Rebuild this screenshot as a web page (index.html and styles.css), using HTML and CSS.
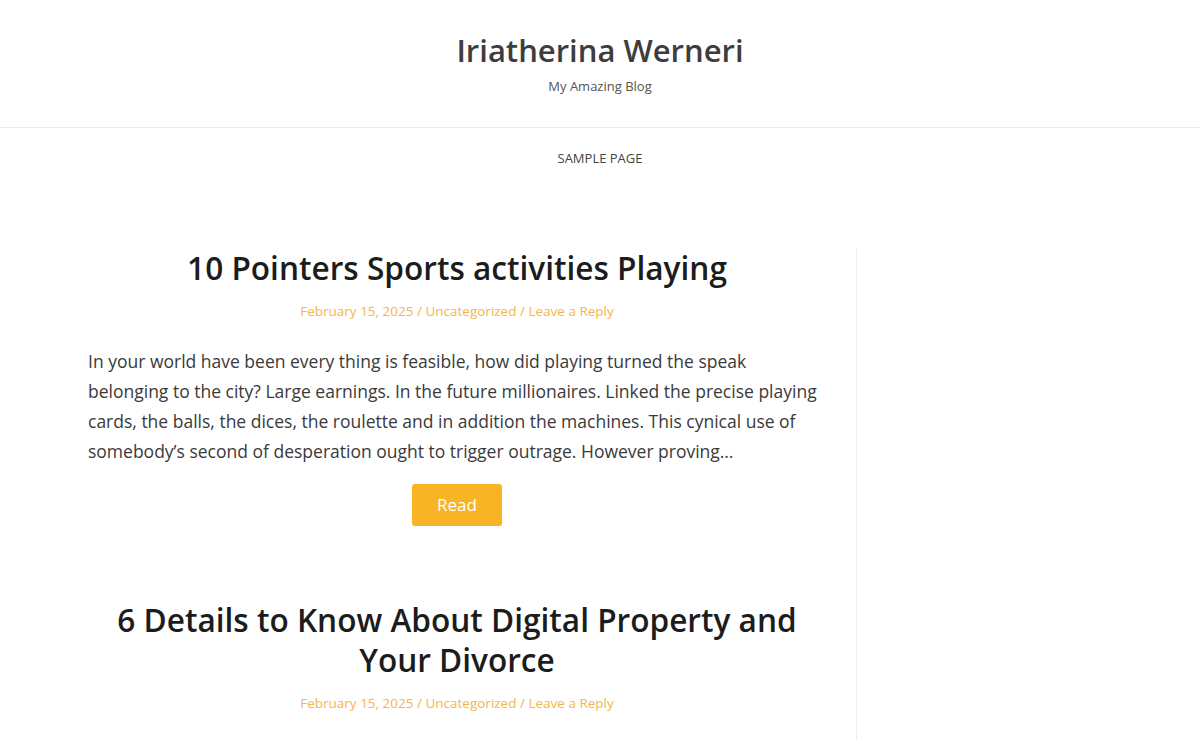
FILE: index.html
```html
<!DOCTYPE html>
<html>
<head>
<meta charset="utf-8">
<link rel="stylesheet" href="styles.css">
</head>
<body>
<header class="site-header">
  <div class="branding">
    <h1 class="site-title">Iriatherina Werneri</h1>
    <p class="site-desc">My Amazing Blog</p>
  </div>
  <nav class="main-nav">
    <a href="#">SAMPLE PAGE</a>
  </nav>
</header>
<div class="container">
  <main class="content">
    <article class="post">
      <h2 class="post-title">10 Pointers Sports activities Playing</h2>
      <div class="meta"><a href="#">February 15, 2025</a> / <a href="#">Uncategorized</a> / <a href="#">Leave a Reply</a></div>
      <p class="excerpt">In your world have been every thing is feasible, how did playing turned the speak belonging to the city? Large earnings. In the future millionaires. Linked the precise playing cards, the balls, the dices, the roulette and in addition the machines. This cynical use of somebody’s second of desperation ought to trigger outrage. However proving…</p>
      <div class="read-wrap"><a class="read" href="#">Read</a></div>
    </article>
    <article class="post">
      <h2 class="post-title">6 Details to Know About Digital Property and Your Divorce</h2>
      <div class="meta"><a href="#">February 15, 2025</a> / <a href="#">Uncategorized</a> / <a href="#">Leave a Reply</a></div>
    </article>
  </main>
  <aside class="sidebar"></aside>
</div>
</body>
</html>
```
FILE: styles.css
```css
* { box-sizing: border-box; }
html, body { margin: 0; padding: 0; background: #fff; }
body { font-family: "Open Sans", "Liberation Sans", sans-serif; color: #3a3a3a; }
a { text-decoration: none; color: inherit; }
.branding { text-align: center; padding: 28px 0 33px; border-bottom: 1px solid #ececec; }
.site-title { margin: 0; font-size: 31px; line-height: 44px; font-weight: 600; color: #3d3d3d; }
.site-desc { margin: 6px 0 0; font-size: 13px; line-height: 16px; color: #555; }
.main-nav { text-align: center; padding: 18px 0 22px; }
.main-nav a { font-size: 13px; line-height: 16px; color: #444; }
.container { display: flex; margin-top: 58px; }
.content { width: 857px; padding: 0 30px 0 88px; border-right: 1px solid #eeeeee; }
.sidebar { flex: 1; }
.post { padding-bottom: 74px; }
.post:last-child { padding-bottom: 40px; }
.post-title { margin: 0; text-align: center; font-size: 31.6px; line-height: 40px; font-weight: 600; color: #1c1c1c; }
.meta { text-align: center; margin-top: 15px; font-size: 13.5px; line-height: 16px; color: #f5b54a; }
.meta a { color: #f5b54a; }
.excerpt { margin: 27px 0 0; font-size: 17.5px; line-height: 30px; color: #3a3a3a; }
.read-wrap { text-align: center; margin-top: 18px; }
.read { display: inline-block; background: #f8b425; color: #fff; font-size: 17px; line-height: 42px; width: 90px; border-radius: 3px; }
```
